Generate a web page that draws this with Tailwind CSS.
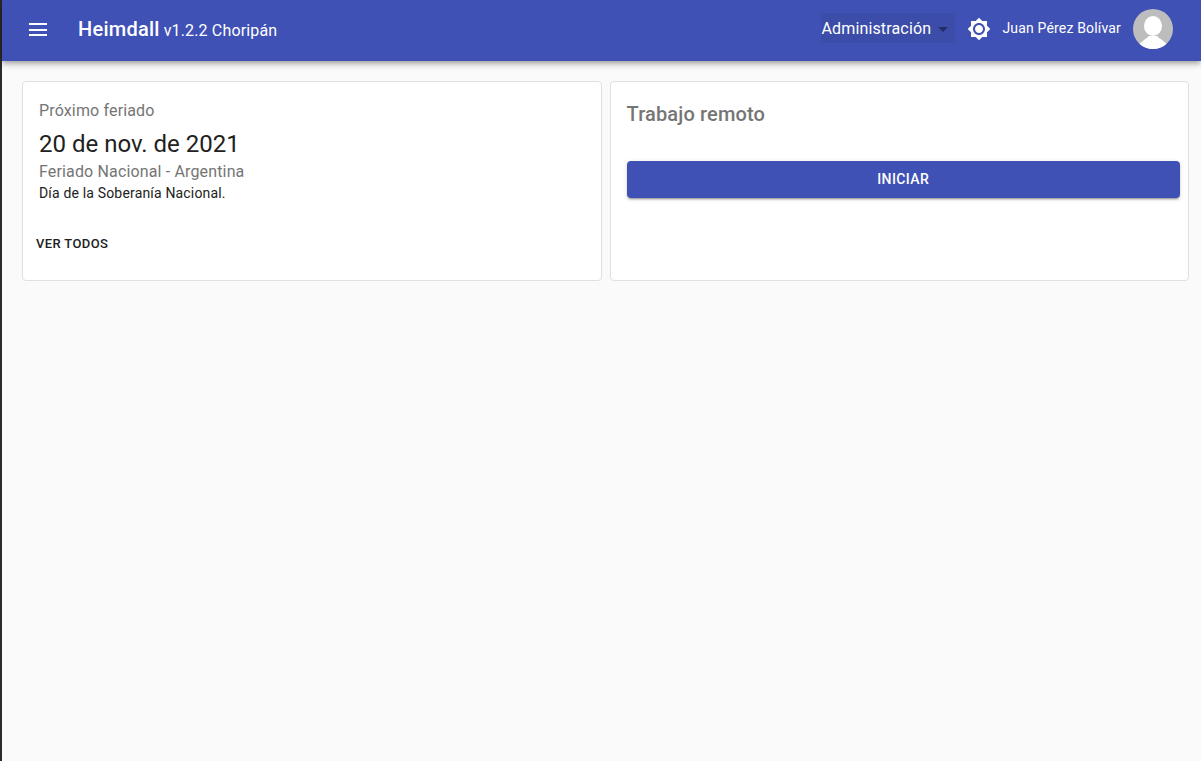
<!DOCTYPE html>
<html lang="es">
<head>
<meta charset="UTF-8">
<meta name="viewport" content="width=device-width, initial-scale=1.0">
<script src="https://cdn.jsdelivr.net/npm/@tailwindcss/browser@4"></script>
<title>Heimdall</title>
</head>
<body class="h-screen overflow-hidden bg-[#fafafa] font-['Roboto',sans-serif] flex">
  <!-- window edge -->
  <div class="w-[2px] shrink-0 bg-[#2b2b2b]"></div>

  <div class="flex-1 min-w-0 flex flex-col">
    <!-- Toolbar -->
    <header class="h-[61px] shrink-0 bg-[#3f51b5] text-white flex items-center pl-[24px] pr-[28px] shadow-[0_2px_4px_-1px_rgba(0,0,0,0.2),0_4px_5px_0_rgba(0,0,0,0.14),0_1px_10px_0_rgba(0,0,0,0.12)] relative">
      <svg viewBox="0 0 24 24" class="w-6 h-6 fill-white mb-[3px]"><path d="M3 19h18v-2H3zm0-5h18v-2H3zm0-6h18V6H3z"/></svg>
      <div class="ml-[28px] mb-[4px] flex items-baseline">
        <span class="text-[20px] font-medium tracking-[0.25px]">Heimdall</span>
        <span class="ml-[4px] text-[16px] tracking-[0.15px]">v1.2.2 Choripán</span>
      </div>
      <div class="ml-auto flex items-center">
        <div class="h-[30px] w-[134px] mb-[5px] flex items-center justify-between bg-[#3c4da9] text-[16px] tracking-[0.15px]">
          <span class="mt-[2px]">Administración</span>
          <span class="mr-[7px] mt-[2px] w-0 h-0 border-x-[5px] border-x-transparent border-t-[5px] border-t-[#222c66]"></span>
        </div>
        <svg viewBox="0 0 24 24" class="ml-[12px] w-6 h-6 fill-white mb-[3px]"><path d="M20 8.69V4h-4.69L12 .69 8.69 4H4v4.69L.69 12 4 15.31V20h4.69L12 23.31 15.31 20H20v-4.69L23.31 12 20 8.69zM12 18c-3.31 0-6-2.69-6-6s2.69-6 6-6 6 2.69 6 6-2.69 6-6 6zm0-10c-2.21 0-4 1.79-4 4s1.79 4 4 4 4-1.79 4-4-1.79-4-4-4z"/></svg>
        <span class="ml-[11px] mb-[4px] text-[14px] tracking-[0.17px]">Juan Pérez Bolívar</span>
        <svg viewBox="0 0 40 40" class="ml-[12px] mb-[3px] w-10 h-10 rounded-full bg-[#bdbdbd]"><ellipse cx="20" cy="17" rx="9" ry="10" fill="#fff"/><path d="M4 40C6 33 12 31 16 27L24 27C28 31 34 33 36 40Z" fill="#fff"/></svg>
      </div>
    </header>

    <!-- Cards -->
    <main class="grid grid-cols-2 gap-[8px] pl-[20px] pr-[12px] pt-[20px]">
      <section class="h-[200px] bg-white border border-[#e0e0e0] rounded-[4px] px-[16px] pt-[19px]">
        <p class="text-[16px] leading-[20px] tracking-[0.15px] text-[#757575]">Próximo feriado</p>
        <p class="mt-[9px] text-[24px] leading-[28px] text-[#212121]">20 de nov. de 2021</p>
        <p class="mt-[4px] text-[16px] leading-[20px] tracking-[0.15px] text-[#757575]">Feriado Nacional - Argentina</p>
        <p class="mt-[1px] text-[14px] leading-[20px] tracking-[0.17px] text-[#212121]">Día de la Soberanía Nacional.</p>
        <button class="mt-[31px] -ml-[3px] block text-[13px] leading-[20px] font-medium tracking-[0.37px] text-[#212121]">VER TODOS</button>
      </section>
      <section class="h-[200px] bg-white border border-[#e0e0e0] rounded-[4px] pl-[16px] pr-[8px] pt-[19px]">
        <h2 class="text-[20px] leading-[26px] font-medium tracking-[0.15px] text-[#757575]">Trabajo remoto</h2>
        <button class="mt-[34px] w-full h-[37px] rounded-[4px] bg-[#3f51b5] text-white text-[14px] font-medium tracking-[0.4px] shadow-[0_3px_1px_-2px_rgba(0,0,0,0.2),0_2px_2px_0_rgba(0,0,0,0.14),0_1px_5px_0_rgba(0,0,0,0.12)]">INICIAR</button>
      </section>
    </main>
  </div>
</body>
</html>
